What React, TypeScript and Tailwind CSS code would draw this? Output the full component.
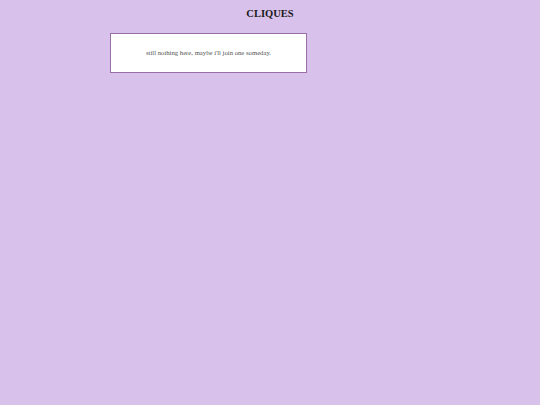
export default function App() {
  return (
    <div className="min-h-[405px] w-full bg-[#d8c1ea] pt-[8px]" style={{ fontFamily: '"Liberation Serif", "Times New Roman", serif' }}>
      <h1 className="text-center text-[10.5px] font-bold leading-[12px] text-[#1a1a1a]">CLIQUES</h1>
      <div className="ml-[110px] mt-[13px] flex h-[40px] w-[197px] items-center justify-center border border-[#9a6fa8] bg-white">
        <p className="text-[6.7px] leading-[8px] text-[#555555]">still nothing here, maybe i'll join one someday.</p>
      </div>
    </div>
  );
}
